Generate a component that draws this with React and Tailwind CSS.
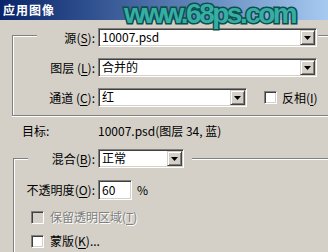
// Photoshop "应用图像" dialog, Windows 2000 look.

const font = '[font-family:"Noto_Sans_CJK_SC","Noto_Sans",sans-serif]'

const sunken =
  'border border-t-[#808080] border-l-[#808080] border-b-white border-r-white ' +
  'shadow-[inset_1px_1px_0_#404040,inset_-1px_-1px_0_#d4d0c8]'

const raised =
  'border border-t-[#d4d0c8] border-l-[#d4d0c8] border-b-[#404040] border-r-[#404040] ' +
  'shadow-[inset_1px_1px_0_#fff,inset_-1px_-1px_0_#808080]'

function Key({ k }) {
  return (
    <>
      (<span className="underline underline-offset-2">{k}</span>)
    </>
  )
}

function Select({ value, width }) {
  return (
    <div className={'flex h-[19px] items-stretch bg-white ' + sunken} style={{ width }}>
      <span className="flex-1 truncate pl-[3px] leading-[15px]">{value}</span>
      <div className={'m-[1px] flex w-[15px] items-center justify-center bg-[#d4d0c8] ' + raised}>
        <svg width="7" height="4" viewBox="0 0 7 4">
          <path d="M0 0h7L3.5 4z" fill="#000" />
        </svg>
      </div>
    </div>
  )
}

function Check({ disabled }) {
  return (
    <div
      className={
        'h-[13px] w-[13px] shrink-0 ' + (disabled ? 'bg-[#d4d0c8] ' : 'bg-white ') + sunken
      }
    />
  )
}

export default function App() {
  return (
    <div
      className={
        'relative h-[252px] w-[328px] overflow-hidden bg-[#d4d0c8] text-[12px] leading-[16px] text-black ' +
        font
      }
    >
      {/* title bar */}
      <div className="flex h-[20px] items-center bg-gradient-to-r from-[#0a246a] to-[#a6caf0] pl-[3px] text-[12px] font-bold tracking-[1px] text-white">
        应用图像
      </div>

      {/* watermark */}
      <div className="pointer-events-none absolute left-[124px] top-[0px] font-['Liberation_Sans',sans-serif] text-[28px] font-bold leading-none tracking-[-2.5px] text-[#37aea5] [-webkit-text-stroke:3px_#0c4f4b] [paint-order:stroke_fill]">
        www.68ps.com
      </div>

      {/* source group */}
      <div className="ml-[12px] mt-[15px] w-[330px] border-l border-t border-b border-[#808080] pb-[8px] shadow-[inset_1px_1px_0_#fff,0_1px_0_#fff]">
        <div className="-mt-[8px] ml-[24px] flex w-[281px] items-center bg-[#d4d0c8]">
          <span className="w-[58px] text-right">
            源<Key k="S" />:
          </span>
          <div className="ml-[3px]">
            <Select value="10007.psd" width={219} />
          </div>
        </div>
        <div className="mt-[11px] flex items-center">
          <span className="w-[82px] text-right">
            图层 <Key k="L" />:
          </span>
          <div className="ml-[3px]">
            <Select value="合并的" width={219} />
          </div>
        </div>
        <div className="mt-[11px] flex items-center">
          <span className="w-[82px] text-right">
            通道 <Key k="C" />:
          </span>
          <div className="ml-[3px]">
            <Select value="红" width={149} />
          </div>
          <div className="ml-[17px] flex items-center gap-[5px]">
            <Check />
            <span>
              反相<Key k="I" />
            </span>
          </div>
        </div>
      </div>

      {/* target */}
      <div className="mt-[7px] flex">
        <span className="w-[76px] pl-[22px]">目标:</span>
        <span className="ml-[22px]">10007.psd(图层 34, 蓝)</span>
      </div>

      {/* blending group */}
      <div className="ml-[13px] mt-[19px] h-[100px] w-[330px] border-l border-t border-[#808080] shadow-[inset_1px_1px_0_#fff]">
        <div className="-mt-[10px] ml-[14px] flex w-[164px] items-center bg-[#d4d0c8]">
          <span className="w-[67px] text-right">
            混合<Key k="B" />:
          </span>
          <div className="ml-[3px]">
            <div className="h-[20px]">
              <Select value="正常" width={86} />
            </div>
          </div>
        </div>
        <div className="mt-[11px] flex items-center">
          <span className="w-[81px] text-right">
            不透明度<Key k="O" />:
          </span>
          <div className={'ml-[3px] h-[20px] w-[34px] bg-white pl-[3px] leading-[18px] ' + sunken}>60</div>
          <span className="ml-[5px]">%</span>
        </div>
        <div className="mt-[9px] ml-[17px] flex items-center gap-[6px] text-[#808080] [text-shadow:1px_1px_0_#fff]">
          <Check disabled />
          <span>
            保留透明区域<Key k="T" />
          </span>
        </div>
        <div className="mt-[8px] ml-[17px] flex items-center gap-[6px]">
          <Check />
          <span>
            蒙版<Key k="K" />...
          </span>
        </div>
      </div>
    </div>
  )
}
